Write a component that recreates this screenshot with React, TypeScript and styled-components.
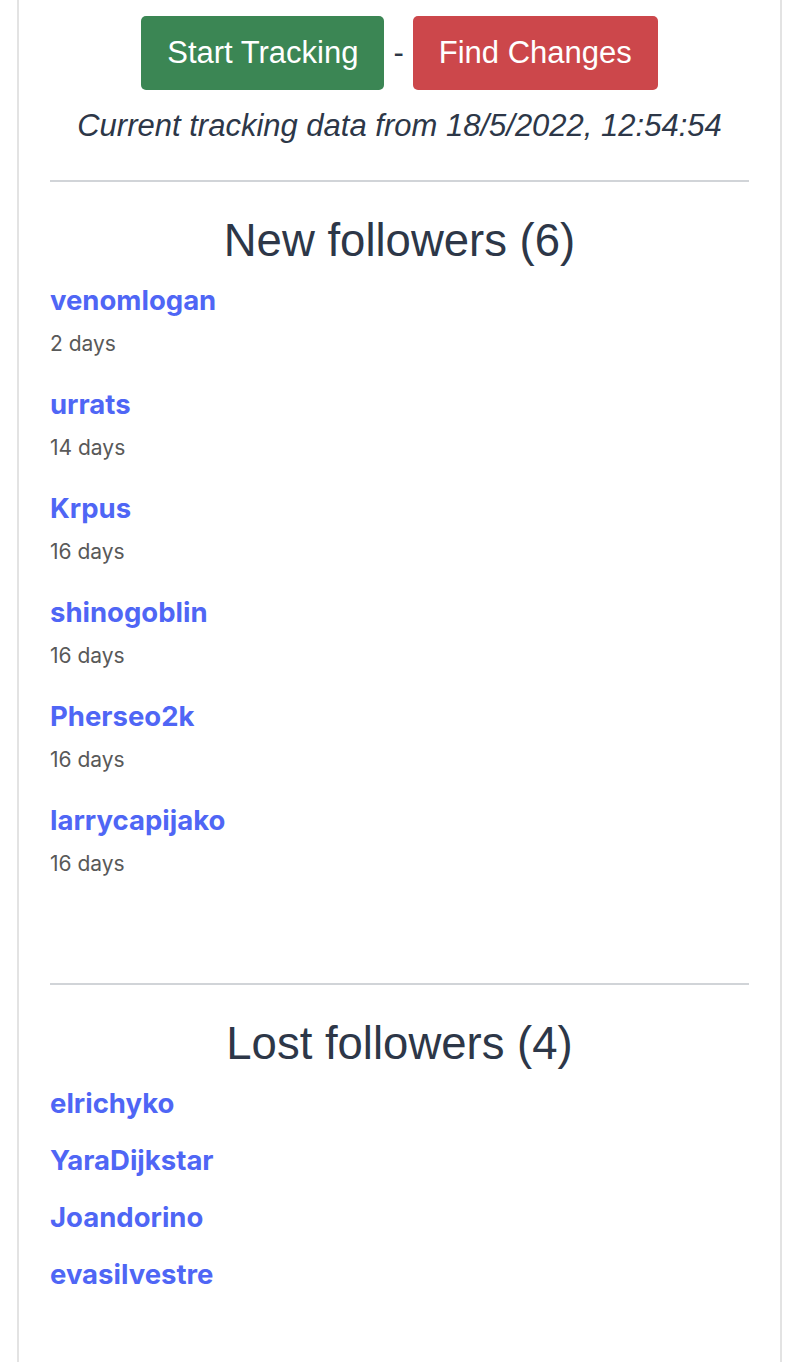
import React from 'react';
import styled, { createGlobalStyle } from 'styled-components';

const GlobalStyle = createGlobalStyle`
  html, body {
    margin: 0;
    padding: 0;
    background: #fff;
  }
  body {
    font-family: "Liberation Sans", Arial, sans-serif;
  }
`;

const Card = styled.div`
  margin: 0 17px;
  min-height: 1362px;
  box-sizing: border-box;
  border-left: 2px solid #e3e3e3;
  border-right: 2px solid #e3e3e3;
  padding: 16px 31px 0;
`;

const Actions = styled.div`
  display: flex;
  justify-content: center;
  align-items: center;
`;

const Button = styled.button<{ $variant: 'start' | 'find' }>`
  height: 74px;
  padding: 0 26px;
  border: none;
  border-radius: 5px;
  font-family: "Liberation Sans", Arial, sans-serif;
  font-size: 31px;
  color: #fff;
  cursor: pointer;
  background-color: ${(p) => (p.$variant === 'start' ? '#3b8654' : '#cc474b')};
`;

const Dash = styled.span`
  font-size: 31px;
  color: #2d3748;
  margin: 0 9px;
`;

const Timestamp = styled.p`
  margin: 13px 0 32px;
  text-align: center;
  font-style: italic;
  font-size: 31px;
  line-height: 45px;
  color: #2d3748;
`;

const Divider = styled.hr`
  border: none;
  border-top: 2px solid #d1d4d8;
  margin: 0;
`;

const Section = styled.section<{ $pad: number }>`
  padding: 0 0 ${(p) => p.$pad}px;
`;

const SectionTitle = styled.h2`
  margin: 32px 0 13px;
  text-align: center;
  font-weight: normal;
  font-size: 45.5px;
  line-height: 54px;
  color: #2d3748;
`;

const Item = styled.div<{ $gap: number }>`
  margin-bottom: ${(p) => p.$gap}px;
`;

const UserLink = styled.a`
  display: block;
  font-family: Inter, "Noto Sans", sans-serif;
  font-weight: 700;
  font-size: 27.5px;
  line-height: 39px;
  color: #4f66f5;
  text-decoration: none;
`;

const Since = styled.div`
  margin-top: 8px;
  font-family: Inter, "Noto Sans", sans-serif;
  font-size: 21px;
  line-height: 32px;
  color: #595959;
`;

const newFollowers = [
  { name: 'venomlogan', since: '2 days' },
  { name: 'urrats', since: '14 days' },
  { name: 'Krpus', since: '16 days' },
  { name: 'shinogoblin', since: '16 days' },
  { name: 'Pherseo2k', since: '16 days' },
  { name: 'larrycapijako', since: '16 days' },
];

const lostFollowers = ['elrichyko', 'YaraDijkstar', 'Joandorino', 'evasilvestre'];

const App = () => {
  return (
    <>
      <GlobalStyle />
      <Card>
        <Actions>
          <Button type="button" $variant="start">Start Tracking</Button>
          <Dash>-</Dash>
          <Button type="button" $variant="find">Find Changes</Button>
        </Actions>
        <Timestamp>Current tracking data from 18/5/2022, 12:54:54</Timestamp>
        <Divider />
        <Section $pad={78}>
          <SectionTitle>New followers ({newFollowers.length})</SectionTitle>
          {newFollowers.map((f) => (
            <Item key={f.name} $gap={25}>
              <UserLink href="#">{f.name}</UserLink>
              <Since>{f.since}</Since>
            </Item>
          ))}
        </Section>
        <Divider />
        <Section $pad={40}>
          <SectionTitle>Lost followers ({lostFollowers.length})</SectionTitle>
          {lostFollowers.map((name) => (
            <Item key={name} $gap={18}>
              <UserLink href="#">{name}</UserLink>
            </Item>
          ))}
        </Section>
      </Card>
    </>
  );
};

export default App;
